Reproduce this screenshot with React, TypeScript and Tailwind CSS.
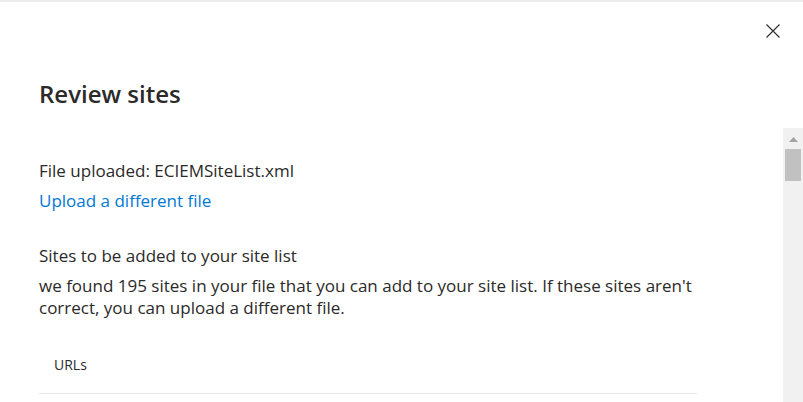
export default function App() {
  return (
    <div className="w-[803px] h-[402px] overflow-hidden bg-white border-t-2 border-[#ececec] flex flex-col text-[#2b2a29] font-['Open_Sans','Noto_Sans',sans-serif]">
      {/* header */}
      <div className="h-[126px] shrink-0 flex flex-col">
        <div className="flex justify-end pt-[22px] pr-[23px]">
          <button type="button" aria-label="Close" className="w-[14px] h-[14px] flex items-center justify-center">
            <svg width="14" height="14" viewBox="0 0 14 14" fill="none" stroke="#323130" strokeWidth="1.2">
              <path d="M0.5 0.5L13.5 13.5M13.5 0.5L0.5 13.5" />
            </svg>
          </button>
        </div>
        <h1 className="pl-[39px] mt-[40px] text-[24px] leading-8 font-semibold">Review sites</h1>
      </div>

      {/* scrolling body */}
      <div className="flex flex-1 min-h-0">
        <div className="flex-1 pl-[39px] pr-[86px] pt-[32px] text-[17px] leading-[22px]">
          <p>File uploaded: ECIEMSiteList.xml</p>
          <a href="#" className="block mt-2 text-[#0078d4]">Upload a different file</a>

          <h2 className="mt-[33px]">Sites to be added to your site list</h2>
          <p className="mt-2">
            we found 195 sites in your file that you can add to your site list. If these sites aren't correct, you can
            upload a different file.
          </p>

          <div className="mt-[36px] border-b border-[#e6e6e6] pl-[15px] pb-[18px] text-[14px] leading-5">
            URLs
          </div>
        </div>

        <div className="w-5 shrink-0 bg-[#f1f1f1] flex flex-col items-center pt-[9px]">
          <svg width="9" height="5" viewBox="0 0 9 5" className="text-[#a3a3a3]">
            <path d="M4.5 0L9 5H0z" fill="currentColor" />
          </svg>
          <div className="mt-[7px] w-[16px] h-[32px] bg-[#c1c1c1]" />
        </div>
      </div>
    </div>
  )
}
